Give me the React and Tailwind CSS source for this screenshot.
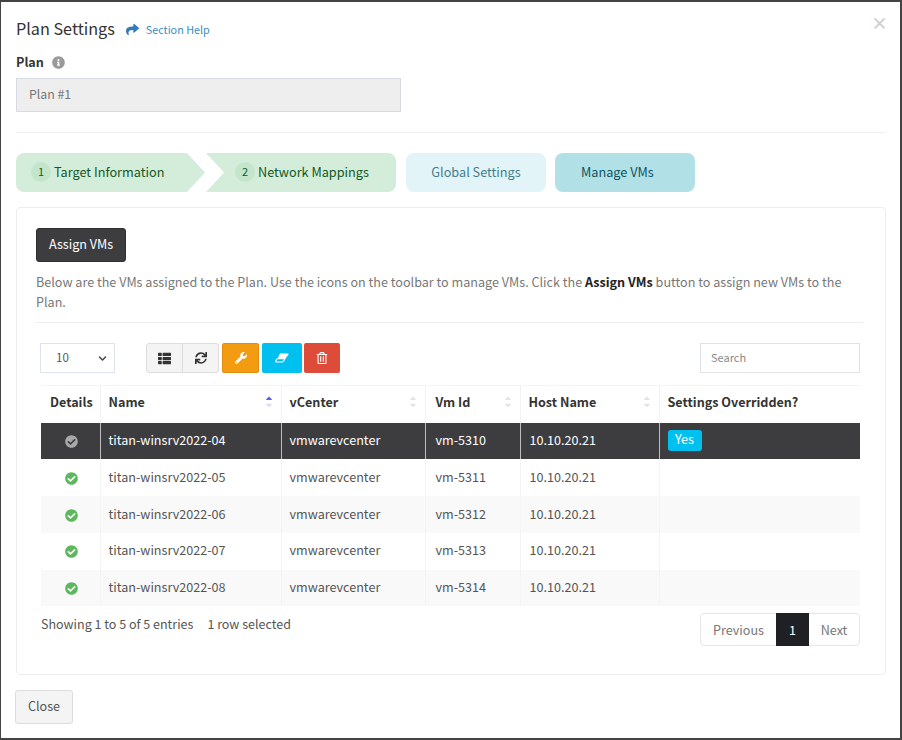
import { FaShare, FaInfoCircle, FaThList, FaSync, FaWrench, FaRegTrashAlt, FaCheckCircle, FaCaretUp, FaCaretDown, FaChevronDown } from "react-icons/fa";

const rows = [
  { name: "titan-winsrv2022-04", vmId: "vm-5310", selected: true, overridden: true },
  { name: "titan-winsrv2022-05", vmId: "vm-5311" },
  { name: "titan-winsrv2022-06", vmId: "vm-5312", striped: true },
  { name: "titan-winsrv2022-07", vmId: "vm-5313" },
  { name: "titan-winsrv2022-08", vmId: "vm-5314", striped: true },
];

function SortIcon({ active }) {
  return (
    <span className="absolute right-[7px] top-[7px] flex flex-col items-center text-[#e2e5e8] text-[10px] leading-[7px]">
      <FaCaretUp className={active ? "text-[#5b5bf0]" : ""} />
      <FaCaretDown className={active ? "text-[#dcdcf5] -mt-[3px]" : "-mt-[3px]"} />
    </span>
  );
}

function HeadCell({ label, width, sort, active, pad = "px-[8px]" }) {
  return (
    <th className={`relative ${width} h-[37px] pb-[4px] border-r border-[#f2f2f2] last:border-r-0 ${pad} text-left font-semibold text-[12.6px] text-[#333]`}>
      {label}
      {sort && <SortIcon active={active} />}
    </th>
  );
}

function Step({ n, label, className }) {
  return (
    <div className={`h-[39px] pb-[2px] bg-[#d4edda] flex items-center text-[#155724] text-[12.7px] ${className}`}>
      <span className="w-[20px] h-[20px] mr-[3px] rounded-full bg-[#c3e6cb] flex items-center justify-center text-[11px]">{n}</span>
      {label}
    </div>
  );
}

export default function App() {
  const cellBorder = (row) => (row.selected ? "border-[#bdbdbd]" : "border-[#f4f4f4]");

  return (
    <div
      className="w-[902px] h-[740px] overflow-hidden bg-white border-l border-t-2 border-r-2 border-b-2 border-[#444] text-[#333] text-[12.6px] px-[14px]"
      style={{ fontFamily: '"Noto Sans CJK SC", "Noto Sans", sans-serif' }}
    >
      <div className="relative h-[54px] pt-[13px] px-[1px] flex items-start">
        <h1 className="text-[16.2px] leading-[26px] text-[#333] mr-[11px]">Plan Settings</h1>
        <a className="flex items-center h-[28px] text-[#3c8dbc] text-[10.8px]">
          <FaShare className="text-[13px] mr-[7px] text-[#337ab7]" />
          Section Help
        </a>
        <span className="absolute right-[-2px] top-[10px] text-[#cfcfcf] text-[17px] font-bold leading-[22px]">×</span>
      </div>

      <div className="flex items-center px-[1px] h-[14px] -translate-y-[1px] font-semibold text-[12.6px] text-[#333]">
        Plan
        <FaInfoCircle className="ml-[8px] text-[13px] text-[#9a9a9a]" />
      </div>
      <div className="ml-[1px] mt-[8px] w-[385px] h-[34px] pb-[2px] bg-[#eeeeee] border border-[#d8dbe3] flex items-center pl-[12px] text-[12.3px] text-[#777]">
        Plan #1
      </div>

      <div className="ml-[1px] mt-[20px] w-[869px] border-t border-[#eeeeee]" />

      <div className="ml-[1px] mt-[20px] flex items-center">
        <Step n="1" label="Target Information" className="w-[190px] pl-[15px] rounded-l-[8px] [clip-path:polygon(0_0,171px_0,189px_50%,171px_100%,0_100%)]" />
        <Step n="2" label="Network Mappings" className="w-[190px] pl-[29px] rounded-r-[8px] [clip-path:polygon(0_0,100%_0,100%_100%,0_100%,18px_50%)]" />
        <div className="ml-[10px] w-[140px] h-[39px] pb-[2px] rounded-[8px] bg-[#e3f4f8] flex items-center justify-center text-[#3f7f8c] text-[12.7px]">Global Settings</div>
        <div className="ml-[9px] w-[140px] h-[39px] pb-[2px] rounded-[8px] bg-[#b2e0e7] flex items-center pl-[26px] text-[#0c5460] text-[12.7px]">Manage VMs</div>
      </div>

      <div className="ml-[1px] mt-[15px] w-[870px] h-[468px] rounded-[4px] border border-[#eeeeee] pl-[19px] pr-[20px] pt-[20px]">
        <button className="w-[90px] h-[34px] pb-[1px] rounded-[3px] bg-[#3d3d3f] border border-[#2f2f31] text-white text-[12.6px] flex items-center justify-center">Assign VMs</button>
        <p className="mt-[10px] text-[12.6px] leading-[20px] text-[#777] w-[826px]">
          Below are the VMs assigned to the Plan. Use the icons on the toolbar to manage VMs. Click the <b className="text-[#222] font-semibold">Assign VMs</b> button to assign new VMs to the Plan.
        </p>
        <div className="mt-[10px] w-[827px] border-t border-[#eeeeee]" />

        <div className="mt-[20px] ml-[4px] flex items-center w-[820px]">
          <div className="w-[75px] h-[30px] border border-[#dfe3ee] flex items-center justify-between pl-[15px] pr-[4px] text-[11.5px] text-[#555]">
            10
            <FaChevronDown className="text-[9px] text-[#444] mr-[3px]" />
          </div>
          <div className="ml-[31px] flex h-[30px]">
            <div className="w-[37px] rounded-l-[3px] bg-[#f4f4f4] border border-[#dddddd] flex items-center justify-center text-[#333] text-[13px]"><FaThList /></div>
            <div className="w-[36px] rounded-r-[3px] bg-[#f4f4f4] border border-l-0 border-[#dddddd] flex items-center justify-center text-[#333] text-[12px]"><FaSync /></div>
            <div className="ml-[3px] w-[37px] rounded-[2px] bg-[#f39c12] border border-[#e08e0b] flex items-center justify-center text-white text-[12px]"><FaWrench /></div>
            <div className="ml-[3px] w-[40px] rounded-[2px] bg-[#00c0ef] flex items-center justify-center">
              <svg viewBox="0 0 14 10" className="w-[14px] h-[10px]">
                <path d="M5 0.5 H13 a0.6 0.6 0 0 1 0.5 1 L10 6.2 H2.2 Z" fill="#fff" />
                <path d="M2.2 5.6 L0.8 8 a0.6 0.6 0 0 0 0.5 1 H7.4 a1 1 0 0 0 0.9-0.5 L10 5.6" fill="none" stroke="#fff" strokeWidth="1.1" />
              </svg>
            </div>
            <div className="ml-[2px] w-[36px] rounded-[2px] bg-[#dd4b39] flex items-center justify-center text-white text-[12px]"><FaRegTrashAlt /></div>
          </div>
          <div className="ml-auto w-[160px] h-[30px] border border-[#dfe3e8] flex items-center pl-[10px] pb-[1px] text-[11px] text-[#8a8a8a]">Search</div>
        </div>

        <table className="mt-[12px] ml-[5px] w-[819px] table-fixed border-collapse text-[12.6px] text-[#555]">
          <thead>
            <tr className="border-t border-[#f4f4f4]">
              <HeadCell label="Details" width="w-[59px]" pad="pl-[9px]" />
              <HeadCell label="Name" width="w-[181px]" sort active />
              <HeadCell label="vCenter" width="w-[144px]" sort />
              <HeadCell label="Vm Id" width="w-[95px]" sort pad="pl-[10px]" />
              <HeadCell label="Host Name" width="w-[139px]" sort />
              <HeadCell label="Settings Overridden?" width="w-[201px]" />
            </tr>
          </thead>
          <tbody>
            {rows.map((row) => (
              <tr
                key={row.name}
                className={row.selected ? "bg-[#3d3d3f] text-white" : row.striped ? "bg-[#f9f9f9]" : "bg-white"}
              >
                <td className={`h-[36.8px] pl-[2px] pb-[1px] text-center border-r ${cellBorder(row)}`}>
                  <FaCheckCircle className={`inline-block text-[13px] ${row.selected ? "text-[#a8a8a8]" : "text-[#5cb85c]"}`} />
                </td>
                <td className={`px-[8px] pb-[1px] border-r ${cellBorder(row)}`}>{row.name}</td>
                <td className={`px-[8px] pb-[1px] border-r ${cellBorder(row)}`}>vmwarevcenter</td>
                <td className={`pl-[10px] pb-[1px] border-r ${cellBorder(row)}`}>{row.vmId}</td>
                <td className={`pl-[9px] pb-[1px] border-r ${cellBorder(row)}`}>10.10.20.21</td>
                <td className="px-[8px]">
                  {row.overridden && (
                    <span className="inline-flex w-[34px] h-[21px] pb-[2px] rounded-[3px] bg-[#00c0ef] items-center justify-center text-[12.6px] text-white align-middle">Yes</span>
                  )}
                </td>
              </tr>
            ))}
          </tbody>
        </table>

        <div className="ml-[5px] mt-[7px] w-[819px] flex items-start justify-between">
          <div className="mt-[1px] text-[12.5px] leading-[20px] text-[#555]">
            Showing 1 to 5 of 5 entries
            <span className="ml-[14px]">1 row selected</span>
          </div>
          <div className="flex h-[33px] rounded-[4px] border border-[#e6e6e6] text-[12.6px] text-[#777]">
            <span className="w-[75px] flex items-center justify-center">Previous</span>
            <span className="w-[33px] -my-px bg-[#1f2023] text-white flex items-center justify-center">1</span>
            <span className="w-[50px] flex items-center justify-center">Next</span>
          </div>
        </div>
      </div>

      <button className="mt-[15px] w-[58px] h-[34px] pb-[2px] rounded-[3px] bg-[#f4f4f4] border border-[#dddddd] text-[#555] text-[12.6px] flex items-center justify-center">Close</button>
    </div>
  );
}
